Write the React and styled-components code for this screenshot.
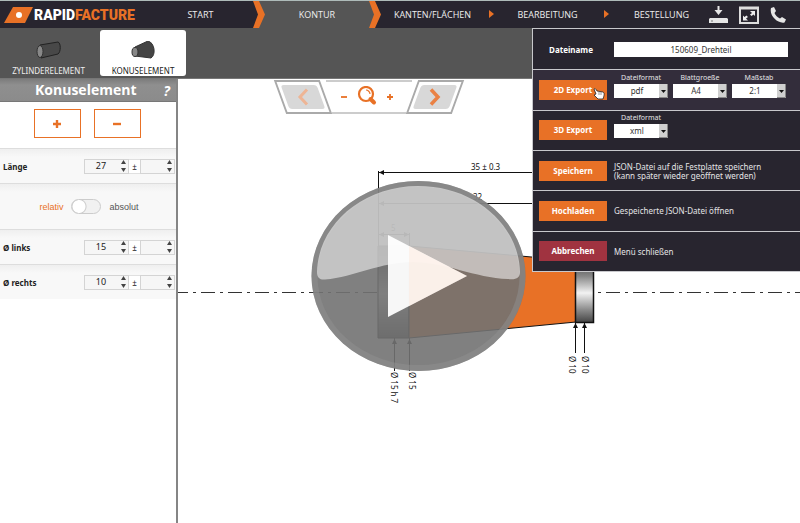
import React from "react";
import styled, { createGlobalStyle, css } from "styled-components";

const ORANGE = "#e87126";
const DARK = "#28252f";
const GREY = "#555555";

const GlobalStyle = createGlobalStyle`
  *, *::before, *::after { box-sizing: border-box; }
  body { margin: 0; background: #fff; font-family: "Noto Sans", "Open Sans", sans-serif; font-size: 9px; color: #222; }
  button, input, select { font: inherit; color: inherit; margin: 0; padding: 0; border: 0; border-radius: 0; }
  button { background: none; cursor: pointer; }
  svg { display: block; flex-shrink: 0; }
`;

const Page = styled.div`
  position: relative;
  display: flex;
  flex-direction: column;
  min-height: 100vh;
`;

const Header = styled.header`
  display: flex;
  height: 28px;
  border-top: 1px solid #aebbb9;
  background: ${DARK};
`;

const Logo = styled.a`
  display: flex;
  align-items: center;
  gap: 1px;
  width: 142px;
  padding-left: 4px;
  font: 900 14px/26px Roboto, "Liberation Sans", sans-serif;
  color: #fff;
  text-decoration: none;
`;

const LogoAccent = styled.span`
  color: ${ORANGE};
`;

const Steps = styled.nav`
  flex: 1;
  display: grid;
  grid-template-columns: 117fr 116fr 115fr 115fr 103fr;
`;

const Step = styled.a`
  position: relative;
  display: flex;
  align-items: center;
  justify-content: center;
  color: #eee;
  text-decoration: none;
  font-family: "Open Sans", "Noto Sans", sans-serif;
  font-size: 9px;
  background: ${(p) => (p.$active ? GREY : "transparent")};
  &:last-child { padding-left: 10px; }
`;

const StepMark = styled.svg`
  position: absolute;
  z-index: 1;
  top: 0;
  right: ${(p) => (p.$small ? "-4px" : "-6px")};
`;

const HeaderTools = styled.div`
  display: flex;
  align-items: center;
  gap: 11px;
  width: 92px;
  padding-left: 1px;
`;

const IconButton = styled.button`
  display: flex;
`;

const ElementBar = styled.div`
  display: flex;
  gap: 3px;
  height: 51px;
  padding: 2px 0;
  background: ${GREY};
  border-bottom: 1px solid #777;
`;

const ElementTab = styled.button`
  display: flex;
  flex-direction: column;
  align-items: center;
  justify-content: flex-end;
  gap: 6px;
  width: ${(p) => (p.$active ? "86px" : "97px")};
  border-radius: 3px;
  font-size: 8px;
  line-height: 11px;
  color: ${(p) => (p.$active ? "#222" : "#eee")};
  background: ${(p) => (p.$active ? "#fff" : "transparent")};
`;

const Workspace = styled.main`
  flex: 1;
  display: flex;
`;

const Sidebar = styled.aside`
  width: 178px;
  border-right: 2px solid #858585;
  background: #fff;
`;

const SidebarTitle = styled.div`
  display: flex;
  align-items: center;
  height: 23px;
  padding: 0 6px 0 8px;
  background: linear-gradient(#7c7c7c, #8f8f8f 6px, #8b8b8b);
  border-bottom: 1px solid #777;
  color: #fff;
  font-family: "Open Sans", "Noto Sans", sans-serif;
`;

const Title = styled.h1`
  flex: 1;
  margin: 0;
  font-size: 14px;
  line-height: 20px;
  text-align: center;
`;

const HelpButton = styled.button`
  font-size: 14px;
  font-weight: bold;
  font-style: italic;
`;

const AddRemove = styled.div`
  display: flex;
  justify-content: center;
  gap: 13px;
  padding: 7px 2px 10px 0;
`;

const OutlineButton = styled.button`
  display: flex;
  align-items: center;
  justify-content: center;
  width: 47px;
  height: 29px;
  border: 1px solid ${ORANGE};
`;

const panelRow = css`
  display: flex;
  align-items: center;
  border-top: 1px solid #ddd;
  background: linear-gradient(#efefef, #f8f8f8 8px, #f8f8f8);
`;

const ValueRow = styled.div`
  ${panelRow}
  height: 35px;
  padding: 0 1px 0 3px;
`;

const ValueLabel = styled.label`
  flex: 1;
  font-size: 8px;
  font-weight: bold;
`;

const Spin = styled.div`
  display: flex;
  align-items: center;
  width: ${(p) => (p.$narrow ? "35px" : "45px")};
  height: 15px;
  padding-right: 2px;
  border: 1px solid #d4d4d4;
  background: #f6f6f6;
`;

const SpinInput = styled.input`
  flex: 1;
  min-width: 0;
  padding-right: 4px;
  background: transparent;
  text-align: center;
  font-size: 9px;
  line-height: 12px;
`;

const PlusMinus = styled.span`
  width: 11px;
  height: 15px;
  background: #fff;
  border: solid #e0e0e0;
  border-width: 1px 0;
  font-size: 8px;
  line-height: 13px;
  text-align: center;
`;

const ToggleRow = styled.label`
  ${panelRow}
  justify-content: center;
  gap: 8px;
  height: 46px;
  padding-left: 2px;
  font: 9px/12px "Liberation Sans", sans-serif;
  color: #555;
`;

const ToggleOn = styled.span`
  color: ${ORANGE};
`;

const Toggle = styled.input`
  appearance: none;
  width: 30px;
  height: 15px;
  border: 1px solid #ccc;
  border-radius: 8px;
  background: radial-gradient(circle at 7px 50%, #fff 6px, #ccc 7px, #f1f1f1 8px);
`;

const Canvas = styled.section`
  position: relative;
  flex: 1;
  min-width: 0;
  overflow: hidden;
`;

const Drawing = styled.svg`
  font-family: "Noto Sans", "Open Sans", sans-serif;
  font-size: 8px;
`;

const ZoomBar = styled.div`
  position: absolute;
  top: 1px;
  left: 102px;
  display: flex;
  height: 34px;
`;

const StepFrame = styled.div`
  width: 46px;
  padding: 3px;
  border: 2px solid #aaa;
  background: #fff;
  transform: skewX(${(p) => p.$skew}deg);
`;

const StepButton = styled.button`
  display: flex;
  align-items: center;
  justify-content: center;
  width: 100%;
  height: 100%;
  border-radius: 3px;
  background: #d8d8d8;
  & > svg { transform: skewX(${(p) => p.$skew}deg); }
`;

const ZoomTools = styled.div`
  display: flex;
  align-items: center;
  justify-content: center;
  gap: 10px;
  width: 86px;
  padding-right: 4px;
  border: solid #ccc;
  border-width: 2px 0;
  background: #fff;
`;

const PlayButton = styled.button`
  position: absolute;
  left: 133px;
  top: 102px;
`;

const ExportMenu = styled.form`
  position: absolute;
  z-index: 3;
  top: 28px;
  right: 0;
  display: grid;
  grid-auto-rows: 1fr;
  width: 268px;
  min-height: 244px;
  border: solid #c8c8cc;
  border-width: 1px 0 1px 1px;
  background: ${DARK};
  color: #e4e4e6;
`;

const MenuRow = styled.div`
  display: grid;
  grid-template-columns: 68px 1fr;
  align-items: center;
  gap: 7px;
  padding: 0 12px 0 6px;
  background: ${(p) => (p.$hover ? "#332d3b" : "transparent")};
  & + & { border-top: 1px solid #c8c8cc; }
`;

const NameLabel = styled.label`
  padding-right: 4px;
  font-size: 8px;
  font-weight: bold;
  text-align: center;
  color: #fff;
`;

const NameInput = styled.input`
  width: 100%;
  height: 15px;
  background: #fff;
  color: #333;
  font-size: 8px;
  text-align: center;
`;

const MenuButton = styled.button`
  position: relative;
  height: 20px;
  background: ${(p) => (p.$danger ? "#a03340" : ORANGE)};
  color: #fff;
  font-size: 8px;
  font-weight: bold;
  line-height: 20px;
`;

const Pointer = styled.svg`
  position: absolute;
  left: 54px;
  top: 8px;
`;

const Hint = styled.p`
  margin: 0;
  font-size: 8px;
  line-height: 9px;
`;

const Fields = styled.div`
  display: flex;
  gap: 5px;
  padding-bottom: 10px;
`;

const Field = styled.label`
  position: relative;
  width: 54px;
  font-size: 7px;
  line-height: 12px;
  text-align: center;
`;

const Select = styled.select`
  appearance: none;
  display: block;
  width: 100%;
  height: 14px;
  padding-right: 8px;
  background: #fff;
  color: #333;
  font-size: 8px;
  line-height: 14px;
  text-align: center;
  text-align-last: center;
`;

const SelectArrow = styled.svg`
  position: absolute;
  right: 0;
  bottom: 0;
  pointer-events: none;
`;

function Chevron() {
  return (
    <StepMark width="12" height="27" viewBox="0 0 12 27" aria-hidden="true">
      <path d="M0 0H6L12 13.500 6 27H0L5 13.500Z" fill={ORANGE} />
    </StepMark>
  );
}

function Triangle() {
  return (
    <StepMark $small width="5" height="27" viewBox="0 0 5 27" aria-hidden="true">
      <path d="M0 9L5 13 0 17Z" fill={ORANGE} />
    </StepMark>
  );
}

function PlusIcon({ size = 8 }) {
  return (
    <svg width={size} height={size} viewBox="0 0 8 8" aria-hidden="true">
      <path d="M4 0V8M0 4H8" stroke={ORANGE} strokeWidth="2.400" />
    </svg>
  );
}

function MinusIcon({ size = 8 }) {
  return (
    <svg width={size} height={size} viewBox="0 0 8 8" aria-hidden="true">
      <path d="M0 4H8" stroke={ORANGE} strokeWidth="2.400" />
    </svg>
  );
}

function Spinner({ id, label, value, narrow }) {
  return (
    <Spin $narrow={narrow}>
      <SpinInput id={id} aria-label={label} defaultValue={value} />
      <svg width="5" height="12" viewBox="0 0 5 12" aria-hidden="true">
        <path d="M0 4L2.500 0 5 4ZM0 8L2.500 12 5 8Z" fill="#444" />
      </svg>
    </Spin>
  );
}

function Dimension({ id, label, value }) {
  return (
    <ValueRow>
      <ValueLabel htmlFor={id}>{label}</ValueLabel>
      <Spinner id={id} value={value} />
      <PlusMinus>±</PlusMinus>
      <Spinner narrow label={`${label} Toleranz`} value="" />
    </ValueRow>
  );
}

function Choice({ label, value }) {
  return (
    <Field>
      {label}
      <Select defaultValue={value}>
        <option>{value}</option>
      </Select>
      <SelectArrow width="9" height="14" viewBox="0 0 9 14" aria-hidden="true">
        <path d="M0 0H9V14H0Z" fill="#d0d0d0" />
        <path d="M0 13.500H8.500V0" stroke="#888" fill="none" />
        <path d="M2 6H7L4.500 9Z" fill="#111" />
      </SelectArrow>
    </Field>
  );
}

function PartDrawing() {
  return (
    <Drawing width="622" height="444" viewBox="178 79 622 444" role="img" aria-label="Drehteil">
      <defs>
        <linearGradient id="steel" x1="0" y1="0" x2="0" y2="1">
          <stop offset="0" stopColor="#444" />
          <stop offset="0.250" stopColor="#888" />
          <stop offset="0.520" stopColor="#f2f2f2" />
          <stop offset="0.800" stopColor="#888" />
          <stop offset="1" stopColor="#444" />
        </linearGradient>
      </defs>
      <path d="M178 292.500H800" stroke="#333" strokeDasharray="14 5 3 5" strokeDashoffset="4" />
      <path d="M378 246H409V338H378Z" fill="url(#steel)" stroke="#111" />
      <path d="M409 246L576 261V322L409 338Z" fill={ORANGE} stroke="#111" />
      <path d="M575.500 261H593.500V322.500H575.500Z" fill="url(#steel)" stroke="#111" strokeWidth="1.500" />
      <g stroke="#111" fill="none">
        <path d="M378.500 171V246M378 172.500H560M378 203.500H560M379 234.500H409M409.500 233V246" />
        <path d="M394.500 338V371M409.500 338V371M575.500 323V353M584.500 323V353" />
      </g>
      <g fill="#111">
        <path d="M379 172.500L384 170V175ZM379 203.500L384 201V206ZM379 234.500L384 232V237ZM409 234.500L404 232V237Z" />
        <path d="M394.500 339L392 344H397ZM409.500 339L407 344H412ZM575.500 323L573 328H578ZM584.500 323L582 328H587Z" />
        <text x="471" y="170">35 ± 0.3</text>
        <text x="473" y="200">32</text>
        <text x="391" y="231">5</text>
        <text transform="translate(391 372) rotate(90)">Ø 15 h 7</text>
        <text transform="translate(409 372) rotate(90)">Ø 15</text>
        <text transform="translate(569 356) rotate(90)">Ø 10</text>
        <text transform="translate(582 356) rotate(90)">Ø 10</text>
      </g>
    </Drawing>
  );
}

function Play() {
  return (
    <PlayButton type="button" aria-label="Video abspielen">
      <svg width="215" height="191" viewBox="311 181 215 191" aria-hidden="true">
        <ellipse cx="418.500" cy="276" rx="107" ry="95" fill="#727272" fillOpacity="0.900" />
        <ellipse cx="418.500" cy="276" rx="104" ry="92" fill="none" stroke="#909090" strokeOpacity="0.500" strokeWidth="6" />
        <path
          d="M317 272C318 226 361 186 418 186C476 186 519 226 520 272C520 278 516 280 508 279C475 278 445 262 413 262C380 262 355 277 325 279.500C320 280 317 278 317 272Z"
          fill="#fff"
          fillOpacity="0.530"
        />
        <path d="M388 235L467 276 388 317Z" fill="#fff" fillOpacity="0.940" />
        <path d="M409 246L467 276 409 306Z" fill="#ffe6d6" fillOpacity="0.400" />
      </svg>
    </PlayButton>
  );
}

export default function App() {
  return (
    <Page>
      <GlobalStyle />
      <Header>
        <Logo href="#">
          <svg width="29" height="16" viewBox="0 0 29 16" aria-hidden="true">
            <path d="M9 0H29L21 16H0Z" fill={ORANGE} />
            <circle cx="15" cy="8" r="3" fill="#fff" />
          </svg>
          <span>RAPID<LogoAccent>FACTURE</LogoAccent></span>
        </Logo>
        <Steps>
          <Step href="#">START<Chevron /></Step>
          <Step href="#" $active>KONTUR<Chevron /></Step>
          <Step href="#">KANTEN/FLÄCHEN<Triangle /></Step>
          <Step href="#">BEARBEITUNG<Triangle /></Step>
          <Step href="#">BESTELLUNG</Step>
        </Steps>
        <HeaderTools>
          <IconButton aria-label="Export">
            <svg width="19" height="18" viewBox="0 0 19 18">
              <path d="M8.500 0H10.500V4H13.500L9.500 9 5.500 4H8.500Z" fill="#e6e6e6" />
              <path d="M1 12H18L19 13V17H0V13Z" fill="#e6e6e6" />
              <path d="M2 15H4" stroke="#777" />
            </svg>
          </IconButton>
          <IconButton aria-label="Vollbild">
            <svg width="20" height="18" viewBox="0 0 20 18">
              <path d="M1 1.500H19V17H1Z" fill="none" stroke="#ddd" strokeWidth="2" />
              <path d="M1 2.500H19" stroke="#ddd" strokeWidth="2" />
              <path d="M11 5H16V10L14.500 8.500 12.500 10 11 8.500 13 7ZM9 14.500H4V9.500L5.500 11 7.500 9.500 9 11 7 12.500Z" fill="#eee" />
            </svg>
          </IconButton>
          <IconButton aria-label="Telefon">
            <svg width="16" height="16" viewBox="0 0 16 16">
              <path d="M1 1L4 0 6 4 4.500 6C5.500 8.500 7.500 10.500 10 11.500L12 10 16 12.500 14.500 15.500C8 17-1 9 1 1Z" fill="#e6e6e6" />
            </svg>
          </IconButton>
        </HeaderTools>
      </Header>

      <ElementBar>
        <ElementTab type="button">
          <svg width="25" height="18" viewBox="0 0 25 18" aria-hidden="true">
            <path d="M4 4L22 1C25 2 25 11 22 13L5 17Z" fill="#484848" stroke="#222" />
            <ellipse cx="4" cy="10.500" rx="3" ry="6" fill="#888" stroke="#333" />
          </svg>
          ZYLINDERELEMENT
        </ElementTab>
        <ElementTab type="button" $active>
          <svg width="25" height="18" viewBox="0 0 25 18" aria-hidden="true">
            <path d="M4 6L17 0C24 2 25 14 20 17L4 15Z" fill="#444" stroke="#333" />
            <ellipse cx="4" cy="11" rx="3" ry="4.500" fill="#888" stroke="#333" />
          </svg>
          KONUSELEMENT
        </ElementTab>
      </ElementBar>

      <Workspace>
        <Sidebar>
          <SidebarTitle>
            <Title>Konuselement</Title>
            <HelpButton type="button">?</HelpButton>
          </SidebarTitle>
          <AddRemove>
            <OutlineButton type="button" aria-label="Hinzufügen"><PlusIcon /></OutlineButton>
            <OutlineButton type="button" aria-label="Entfernen"><MinusIcon /></OutlineButton>
          </AddRemove>
          <Dimension id="length" label="Länge" value="27" />
          <ToggleRow>
            <ToggleOn>relativ</ToggleOn>
            <Toggle type="checkbox" role="switch" />
            <span>absolut</span>
          </ToggleRow>
          <Dimension id="left" label="Ø links" value="15" />
          <Dimension id="right" label="Ø rechts" value="10" />
        </Sidebar>

        <Canvas>
          <PartDrawing />
          <ZoomBar>
            <StepFrame $skew={20}>
              <StepButton type="button" disabled $skew={-20} aria-label="Zurück">
                <svg width="12" height="18" viewBox="0 0 12 18">
                  <path d="M10 1.500L3 9 10 16.500" fill="none" stroke="#eeb595" strokeWidth="3" />
                </svg>
              </StepButton>
            </StepFrame>
            <ZoomTools>
              <IconButton type="button" aria-label="Verkleinern"><MinusIcon size={6} /></IconButton>
              <IconButton type="button" aria-label="Zoom">
                <svg width="20" height="22" viewBox="0 0 20 22">
                  <circle cx="9" cy="8" r="7" fill="none" stroke={ORANGE} strokeWidth="2.200" />
                  <path d="M9 4C11 4 13 6 13 8" fill="none" stroke={ORANGE} strokeWidth="1.200" />
                  <path d="M13.500 13L17 16.500" stroke={ORANGE} strokeWidth="4" strokeLinecap="round" />
                </svg>
              </IconButton>
              <IconButton type="button" aria-label="Vergrößern"><PlusIcon size={6} /></IconButton>
            </ZoomTools>
            <StepFrame $skew={-20}>
              <StepButton type="button" $skew={20} aria-label="Weiter">
                <svg width="12" height="18" viewBox="0 0 12 18">
                  <path d="M2 1.500L9 9 2 16.500" fill="none" stroke="#ea8144" strokeWidth="3.500" />
                </svg>
              </StepButton>
            </StepFrame>
          </ZoomBar>
          <Play />
        </Canvas>
      </Workspace>

      <ExportMenu>
        <MenuRow>
          <NameLabel htmlFor="filename">Dateiname</NameLabel>
          <NameInput id="filename" defaultValue="150609_Drehteil" />
        </MenuRow>
        <MenuRow $hover>
          <MenuButton type="button">
            2D Export
            <Pointer width="12" height="12" viewBox="0 0 12 12" aria-hidden="true">
              <path d="M1 1C2 0 3 1 4 3L10 4C12 5 11 8 10 11H5L1 7 3 6Z" fill="#fff" stroke="#222" strokeWidth="0.800" />
              <path d="M6 4V7M8 4V7" stroke="#555" strokeWidth="0.600" />
            </Pointer>
          </MenuButton>
          <Fields>
            <Choice label="Dateiformat" value="pdf" />
            <Choice label="Blattgroeße" value="A4" />
            <Choice label="Maßstab" value="2:1" />
          </Fields>
        </MenuRow>
        <MenuRow>
          <MenuButton type="button">3D Export</MenuButton>
          <Fields>
            <Choice label="Dateiformat" value="xml" />
          </Fields>
        </MenuRow>
        <MenuRow>
          <MenuButton type="button">Speichern</MenuButton>
          <Hint>JSON-Datei auf die Festplatte speichern<br />(kann später wieder geöffnet werden)</Hint>
        </MenuRow>
        <MenuRow>
          <MenuButton type="button">Hochladen</MenuButton>
          <Hint>Gespeicherte JSON-Datei öffnen</Hint>
        </MenuRow>
        <MenuRow>
          <MenuButton type="button" $danger>Abbrechen</MenuButton>
          <Hint>Menü schließen</Hint>
        </MenuRow>
      </ExportMenu>
    </Page>
  );
}
